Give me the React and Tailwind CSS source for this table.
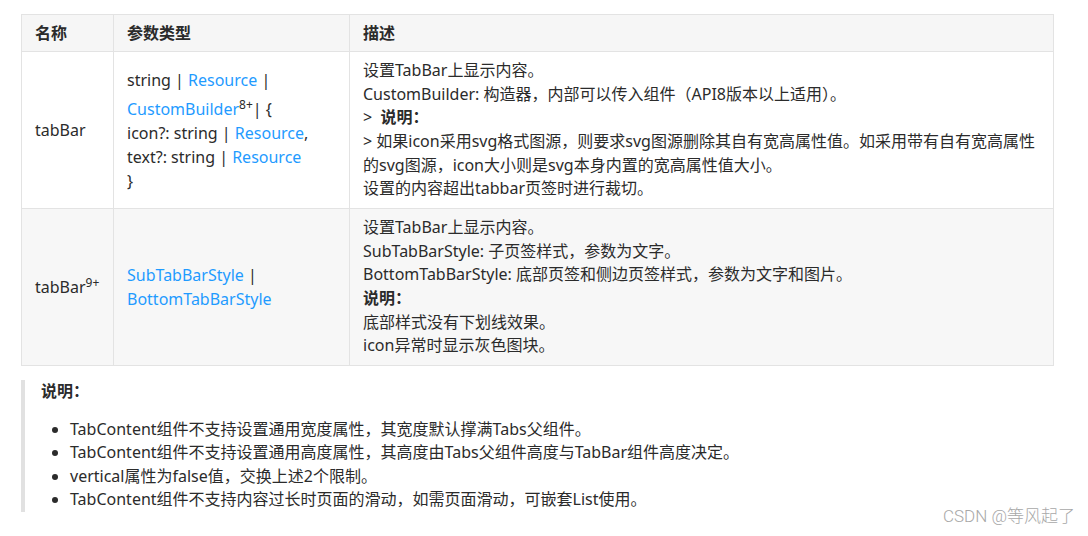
import React from "react";

const FONT = { fontFamily: '"Noto Sans", "Noto Sans CJK SC", sans-serif' };

const Link = ({ children }) => <span className="text-[#1f9bff]">{children}</span>;

export default function App() {
  return (
    <div className="relative min-h-[536px] w-[1088px] bg-white pl-[21px] pt-[14px] text-[16px] text-[#2b2b2b]" style={FONT}>
      <table className="w-[1032px] table-fixed border-collapse">
        <colgroup>
          <col className="w-[92px]" />
          <col className="w-[236px]" />
          <col className="w-[704px]" />
        </colgroup>
        <thead>
          <tr className="h-[37px] bg-[#f6f6f6]">
            <th className="border border-[#e3e3e3] px-[13px] text-left font-bold">名称</th>
            <th className="border border-[#e3e3e3] px-[13px] text-left font-bold">参数类型</th>
            <th className="border border-[#e3e3e3] px-[13px] text-left font-bold">描述</th>
          </tr>
        </thead>
        <tbody>
          <tr className="h-[157px]">
            <td className="border border-[#e3e3e3] px-[13px] align-middle">tabBar</td>
            <td className="border border-[#e3e3e3] px-[13px] align-middle leading-[24px]">
              <div>string | <Link>Resource</Link> |</div>
              <div className="mt-[5px]">
                <Link>CustomBuilder</Link>
                <sup className="text-[12px]">8+</sup>| {"{"}
              </div>
              <div>icon?: string | <Link>Resource</Link>,</div>
              <div>text?: string | <Link>Resource</Link></div>
              <div>{"}"}</div>
            </td>
            <td className="whitespace-nowrap border border-[#e3e3e3] px-[13px] py-[6px] align-middle leading-[23.6px]">
              <div>设置TabBar上显示内容。</div>
              <div>CustomBuilder: 构造器，内部可以传入组件（API8版本以上适用）。</div>
              <div>
                &gt;&nbsp; <span className="font-bold">说明：</span>
              </div>
              <div>&gt; 如果icon采用svg格式图源，则要求svg图源删除其自有宽高属性值。如采用带有自有宽高属性</div>
              <div>的svg图源，icon大小则是svg本身内置的宽高属性值大小。</div>
              <div>设置的内容超出tabbar页签时进行裁切。</div>
            </td>
          </tr>
          <tr className="h-[157px] bg-[#f7f7f7]">
            <td className="border border-[#e3e3e3] px-[13px] align-middle">
              tabBar<sup className="text-[12px]">9+</sup>
            </td>
            <td className="border border-[#e3e3e3] px-[13px] align-middle leading-[24px]">
              <div>
                <Link>SubTabBarStyle</Link> |
              </div>
              <div>
                <Link>BottomTabBarStyle</Link>
              </div>
            </td>
            <td className="whitespace-nowrap border border-[#e3e3e3] px-[13px] py-[6px] align-middle leading-[23.6px]">
              <div>设置TabBar上显示内容。</div>
              <div>SubTabBarStyle: 子页签样式，参数为文字。</div>
              <div>BottomTabBarStyle: 底部页签和侧边页签样式，参数为文字和图片。</div>
              <div className="font-bold">说明：</div>
              <div>底部样式没有下划线效果。</div>
              <div>icon异常时显示灰色图块。</div>
            </td>
          </tr>
        </tbody>
      </table>

      <div className="mt-[14px] w-[1032px] border-l-4 border-[#e1e1e1] pl-[16px] leading-[23.5px]">
        <div className="font-bold">说明：</div>
        <ul className="mt-[14px] list-disc pl-[29px]">
          <li>TabContent组件不支持设置通用宽度属性，其宽度默认撑满Tabs父组件。</li>
          <li>TabContent组件不支持设置通用高度属性，其高度由Tabs父组件高度与TabBar组件高度决定。</li>
          <li>vertical属性为false值，交换上述2个限制。</li>
          <li>TabContent组件不支持内容过长时页面的滑动，如需页面滑动，可嵌套List使用。</li>
        </ul>
      </div>

      <div
        className="absolute bottom-[7px] right-[13px] text-[17px] font-light text-[#a8a8a8]"
        style={{ fontFamily: 'Roboto, "Noto Sans CJK SC", sans-serif' }}
      >
        CSDN @等风起了
      </div>
    </div>
  );
}
